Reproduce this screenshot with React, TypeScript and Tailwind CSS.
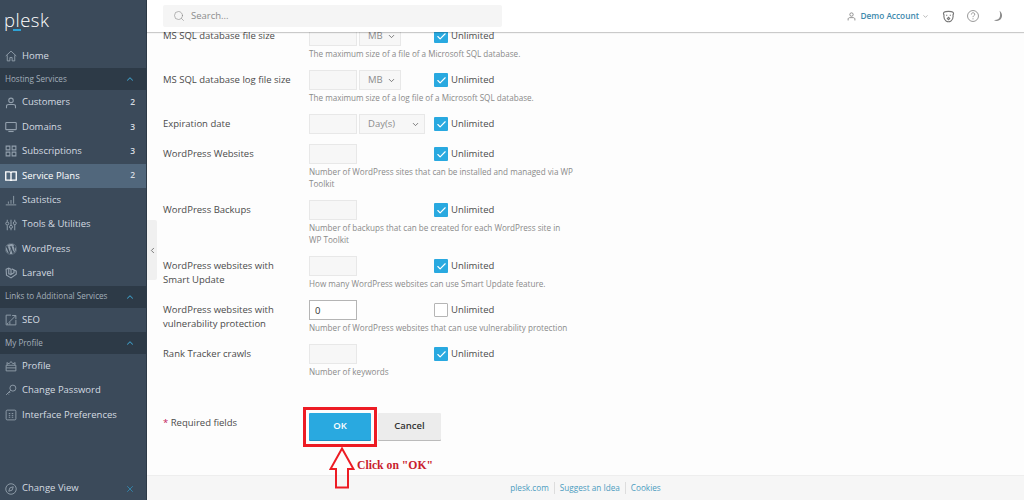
import { ReactNode } from "react";
import { Check, ChevronDown, ChevronLeft, ChevronUp, Search, X } from "lucide-react";
import { FaWordpress } from "react-icons/fa";

const iconClass = "w-[12px] h-[12px] text-[#93a0ad] shrink-0";

const Icon = ({ children, className = iconClass, width = 1.2 }: { children: ReactNode; className?: string; width?: number }) => (
    <svg viewBox="0 0 16 16" className={className} fill="none" stroke="currentColor" strokeWidth={width}>
        {children}
    </svg>
);

const HomeIcon = () => (
    <Icon>
        <path d="M1 8 8 1.500 15 8M3 7v7.500h3.500V10h3v4.500H13V7" />
    </Icon>
);

const UserIcon = ({ className = iconClass }: { className?: string }) => (
    <Icon className={className} width={1.400}>
        <circle cx="8" cy="4.500" r="3" />
        <path d="M2 15v-2.500c0-1.500 1.500-2.500 3-2.500h6c1.500 0 3 1 3 2.500V15" />
    </Icon>
);

const MonitorIcon = () => (
    <Icon width={1.500}>
        <rect x="1" y="2" width="14" height="9.500" rx="1" />
        <path d="M4.500 14h7" />
    </Icon>
);

const GridIcon = () => (
    <Icon width={1.400}>
        <path d="M1.500 1.500h5v5h-5zM9.500 1.500h5v5h-5zM1.500 9.500h5v5h-5zM9.500 9.500h5v5h-5z" />
    </Icon>
);

const BookIcon = () => (
    <Icon className="w-[12px] h-[12px] text-white shrink-0" width={1.800}>
        <path d="M1 2.500h5c1 0 2 .5 2 1.500 0-1 1-1.500 2-1.500h5v11h-5c-1 0-2 .5-2 1-0-.5-1-1-2-1H1zM8 4v10.500" />
    </Icon>
);

const StatsIcon = () => (
    <Icon>
        <path d="M1 14.500h14M4.500 13v-3M8 13V8M11.500 13V2.500" />
    </Icon>
);

const ToolsIcon = () => (
    <Icon width={1.300}>
        <path d="M3 1v2.500M3 8.500V15M8 1v7M8 13v2M13 1v2M13 8v7" />
        <circle cx="3" cy="6" r="2" />
        <circle cx="8" cy="10.500" r="2" />
        <circle cx="13" cy="5.500" r="2" />
    </Icon>
);

const LaravelIcon = () => (
    <Icon width={1.500}>
        <path d="M1.500 3 5 1.500 8 3v7l4-2.500V4l3 1.500v4L8 14.500 2 11z" />
        <path d="M5 1.500V9l3 1M12 4l-3-1.500" />
    </Icon>
);

const SeoIcon = () => (
    <Icon>
        <path d="M8 1.500H1.500v13h13V8M5 11.500 14 2.500M9.500 2h5v5M3.500 14v-2M6.500 14v-3" />
    </Icon>
);

const ProfileIcon = () => (
    <Icon>
        <path d="M1.500 7h13v7.500h-13zM3 7 2.500 3.500 5.500 5 8 2l2.500 3 3-1.500L13 7M1.500 10.500h13" />
    </Icon>
);

const KeyIcon = () => (
    <Icon>
        <circle cx="10.500" cy="5.500" r="4" />
        <path d="M7.500 8.500 1.500 14.500M3.500 12.500l1.500 1.500M5.500 10.500l1.500 1.500" />
    </Icon>
);

const PrefsIcon = () => (
    <Icon>
        <rect x="1.500" y="1.500" width="13" height="13" rx="1.500" />
        <path d="M5 6h2M9 6h2M5 8.500h2M9 8.500h2M5 11h2M9 11h2" />
    </Icon>
);

const CompassIcon = () => (
    <Icon>
        <circle cx="8" cy="8" r="7" />
        <path d="M11 5 9.500 9.500 5 11l1.500-4.500z" />
    </Icon>
);

const BearIcon = () => (
    <Icon className="w-[13px] h-[13px] text-[#777]" width={1.400}>
        <path d="M3 2.500C4.500 1.500 11.500 1.500 13 2.500c1.500 1 1.500 2.500.5 3.500.5 3-.5 6-2.500 7.500-1.500 1-4.500 1-6 0C3 12 2 9 2.500 6c-1-1-1-2.500.5-3.500z" />
        <path d="M5 6.500h1.500M9.500 6.500H11M6.500 10.500 8 9l1.500 1.500L8 12z" />
    </Icon>
);

const HelpIcon = () => (
    <Icon className="w-[12px] h-[12px] text-[#777]" width={1}>
        <circle cx="8" cy="8" r="7.300" />
        <path d="M5.800 6c0-3 4.500-3 4.500-.3 0 1.800-2.300 1.800-2.300 3.800M8 11v1.500" />
    </Icon>
);

const MoonIcon = () => (
    <svg viewBox="0 0 16 16" className="w-[12px] h-[12px] text-[#8c8c8c]" fill="currentColor">
        <path d="M10 1c3.500 2.500 4.500 7.500 2 10.800-2.200 3-6.500 3.500-9.500 1.500 3.500.5 7-1 8-4.300.6-2.800.4-5.500-.5-8z" />
    </svg>
);

const NavItem = ({ icon, label, count, active }: { icon: ReactNode; label: string; count?: number; active?: boolean }) => (
    <div className={`flex items-center h-[24.4px] pl-[5px] pr-[11px] ${active ? "bg-[#51677c]" : ""}`}>
        <div className="w-[17px] flex">{icon}</div>
        <span className={`flex-1 ${active ? "text-white" : "text-[#d5dbe1]"}`}>{label}</span>
        {count !== undefined && <span className="text-[#d5dbe1] text-[8.500px] font-semibold">{count}</span>}
    </div>
);

const NavSection = ({ label }: { label: string }) => (
    <div className="flex items-center justify-between h-[22px] pl-[5px] pr-[11px] bg-[#2d3a47] text-[#a4afba] text-[8.100px]">
        <span>{label}</span>
        <ChevronUp className="w-[10px] h-[10px] text-[#3f9cc5]" strokeWidth={2.500} />
    </div>
);

const Sidebar = () => (
    <aside className="w-[146px] shrink-0 bg-[#3b4a5a] flex flex-col text-[9.500px] border-r border-[#2d3a47] box-content">
        <div className="h-[44px] relative pl-[4px] pt-[4px]">
            <span className="text-white text-[18.500px] font-light leading-[32px] tracking-[0.5px]">plesk</span>
            <div className="absolute left-[13px] top-[29px] w-[8px] h-[2px] bg-[#2ea3d6]" />
        </div>
        <NavItem icon={<HomeIcon />} label="Home" />
        <NavSection label="Hosting Services" />
        <NavItem icon={<UserIcon />} label="Customers" count={2} />
        <NavItem icon={<MonitorIcon />} label="Domains" count={3} />
        <NavItem icon={<GridIcon />} label="Subscriptions" count={3} />
        <NavItem icon={<BookIcon />} label="Service Plans" count={2} active />
        <NavItem icon={<StatsIcon />} label="Statistics" />
        <NavItem icon={<ToolsIcon />} label="Tools & Utilities" />
        <NavItem icon={<FaWordpress className={iconClass} />} label="WordPress" />
        <NavItem icon={<LaravelIcon />} label="Laravel" />
        <NavSection label="Links to Additional Services" />
        <NavItem icon={<SeoIcon />} label="SEO" />
        <NavSection label="My Profile" />
        <NavItem icon={<ProfileIcon />} label="Profile" />
        <NavItem icon={<KeyIcon />} label="Change Password" />
        <NavItem icon={<PrefsIcon />} label="Interface Preferences" />
        <div className="mt-auto h-[24px] pt-[1px] flex items-center pl-[5px] pr-[11px]">
            <div className="w-[17px] flex">
                <CompassIcon />
            </div>
            <span className="flex-1 text-[#d5dbe1]">Change View</span>
            <X className="w-[10px] h-[10px] text-[#2ea3d6]" strokeWidth={1.500} />
        </div>
    </aside>
);

const Header = () => (
    <header className="relative z-10 h-[32px] shrink-0 bg-white shadow-[0_1px_1px_rgba(0,0,0,0.2)] flex items-center pl-[16px] pr-[20px]">
        <div className="w-[339px] h-[22px] bg-[#f5f5f5] rounded-[2px] flex items-center pl-[10px] text-[#8c8c8c] text-[9.500px]">
            <Search className="w-[12px] h-[12px] text-[#888]" strokeWidth={1.200} />
            <span className="ml-[6px]">Search...</span>
        </div>
        <div className="ml-auto flex items-center">
            <UserIcon className="w-[9px] h-[9px] text-[#777]" />
            <span className="ml-[4px] text-[#3d89ad] text-[8.300px] font-semibold">Demo Account</span>
            <ChevronDown className="ml-[3px] w-[7px] h-[7px] text-[#888]" />
            <div className="ml-[13px]"><BearIcon /></div>
            <div className="ml-[12px]"><HelpIcon /></div>
            <div className="ml-[13px]"><MoonIcon /></div>
        </div>
    </header>
);

type RowProps = {
    label: ReactNode;
    desc?: ReactNode;
    unit?: string;
    unitW?: string;
    value?: string;
    checked?: boolean;
};

const Row = ({ label, desc, unit, unitW, value, checked = true }: RowProps) => (
    <div className="flex pb-[10px]">
        <div className="w-[146px] shrink-0 pt-[3px] leading-[14px] text-[9.500px] text-[#4b4b4b]">{label}</div>
        <div>
            <div className="flex items-center h-[20px]">
                <div className="w-[125px] flex gap-[2px]">
                    {checked ? (
                        <input disabled className="w-[48px] h-[20px] bg-[#f7f7f7] border border-[#e8e8e8]" />
                    ) : (
                        <input readOnly value={value} className="w-[48px] h-[20px] bg-white border border-[#b5b5b5] px-[5px] text-[9.500px] text-[#333]" />
                    )}
                    {unit && (
                        <div className={`${unitW} h-[20px] bg-[#f7f7f7] border border-[#e8e8e8] flex items-center justify-between pl-[8px] pr-[4px] text-[9.500px] text-[#8c8c8c]`}>
                            <span>{unit}</span>
                            <ChevronDown className="w-[9px] h-[9px] text-[#555]" strokeWidth={2} />
                        </div>
                    )}
                </div>
                {checked ? (
                    <div className="w-[14px] h-[14px] bg-[#29a9e0] rounded-[1px] flex items-center justify-center">
                        <Check className="w-[11px] h-[11px] text-white" strokeWidth={2.500} />
                    </div>
                ) : (
                    <div className="w-[14px] h-[14px] bg-white border border-[#b5b5b5] rounded-[1px]" />
                )}
                <span className="ml-[3px] text-[9.500px] text-[#4b4b4b]">Unlimited</span>
            </div>
            {desc && <div className="mt-[2px] w-[300px] leading-[12px] text-[8.150px] text-[#8a8a8a] whitespace-pre-line">{desc}</div>}
        </div>
    </div>
);

const Form = () => (
    <div className="flex-1 overflow-hidden bg-[#fdfdfd] -mt-[6px] pl-[16px]">
        <Row label="MS SQL database file size" unit="MB" unitW="w-[42px]" desc="The maximum size of a file of a Microsoft SQL database." />
        <Row label="MS SQL database log file size" unit="MB" unitW="w-[42px]" desc="The maximum size of a log file of a Microsoft SQL database." />
        <Row label="Expiration date" unit="Day(s)" unitW="w-[66px]" />
        <Row label="WordPress Websites" desc={"Number of WordPress sites that can be installed and managed via WP\nToolkit"} />
        <Row label="WordPress Backups" desc={"Number of backups that can be created for each WordPress site in\nWP Toolkit"} />
        <Row label={<>WordPress websites with<br />Smart Update</>} desc="How many WordPress websites can use Smart Update feature." />
        <Row label={<>WordPress websites with<br />vulnerability protection</>} value="0" checked={false} desc="Number of WordPress websites that can use vulnerability protection" />
        <Row label="Rank Tracker crawls" desc="Number of keywords" />
        <div className="flex mt-[25px]">
            <div className="w-[146px] shrink-0 text-[9.500px] text-[#4b4b4b] pt-[2px] leading-[16px]">
                <span className="text-[#c2185b]">*</span> Required fields
            </div>
            <button className="w-[62px] h-[27px] bg-[#29a9e0] rounded-[1px] shadow-[0_1px_0_#1d8fc2] text-white text-[9.500px] font-semibold">OK</button>
            <button className="ml-[7px] w-[63px] h-[27px] bg-[#ececec] rounded-[1px] shadow-[0_1px_0_#bbb] text-[#333] text-[9.500px] font-semibold">Cancel</button>
        </div>
    </div>
);

const Footer = () => (
    <footer className="h-[25px] shrink-0 bg-[#f6f6f6] border-t border-[#eeeeee] flex items-center justify-center text-[8.200px] text-[#4b9cc0]">
        <span className="pr-[5px] border-r border-[#dddddd]">plesk.com</span>
        <span className="px-[5px] border-r border-[#dddddd]">Suggest an Idea</span>
        <span className="pl-[5px]">Cookies</span>
    </footer>
);

const App = () => {
    return (
        <div className="relative w-[1024px] h-[500px] overflow-hidden flex font-['Open_Sans',sans-serif]">
            <Sidebar />
            <main className="flex-1 min-w-0 flex flex-col bg-white">
                <Header />
                <Form />
                <Footer />
            </main>

            {/* collapse handle */}
            <div className="absolute left-[147px] top-[220px] w-[10px] h-[60px] bg-[#f0f0f0] rounded-r-[2px] flex items-center justify-center">
                <ChevronLeft className="w-[9px] h-[9px] text-[#555]" strokeWidth={2} />
            </div>

            {/* tutorial annotation */}
            <div className="absolute left-[303px] top-[407px] w-[74px] h-[40px] border-[3px] border-[#ed1c24]" />
            <svg className="absolute left-[329px] top-[447px] w-[26px] h-[42px]" viewBox="0 0 26 42" fill="none" stroke="#ed1c24" strokeWidth="2">
                <path d="M13 1.500 24.500 22H19V40.500H7V22H1.500Z" />
            </svg>
            <span className="absolute left-[357px] top-[458px] text-[11.700px] leading-[16px] font-bold text-[#c9202c] font-['Liberation_Serif',serif]">
                Click on "OK"
            </span>
        </div>
    );
};

export default App;
